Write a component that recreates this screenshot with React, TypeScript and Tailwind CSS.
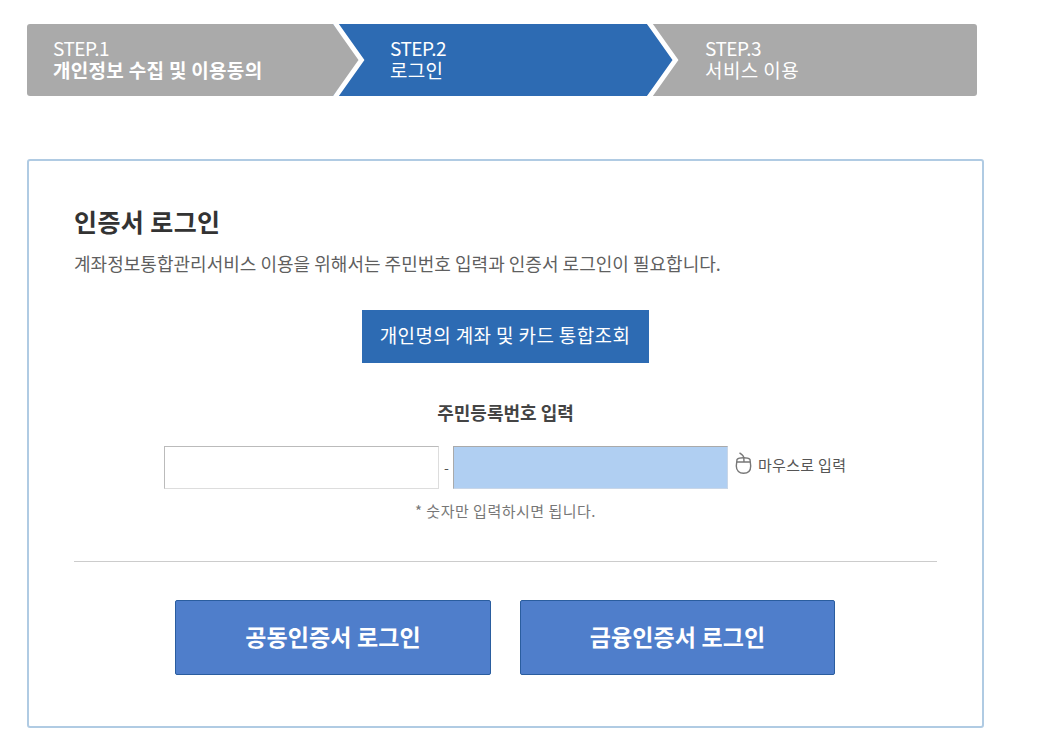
import React from 'react'

const Chevron: React.FC<{ fill: string }> = ({ fill }) => (
  <svg className="absolute top-0 left-full z-10" width="33" height="72" viewBox="0 0 33 72">
    <polygon points="0,0 28,36 0,72" fill={fill} />
    <polyline points="0.8,-3 28.5,36 0.8,75" fill="none" stroke="#fff" strokeWidth="4.8" />
  </svg>
)

const MouseIcon: React.FC = () => (
  <svg width="17" height="22" viewBox="0 0 17 22" fill="none" stroke="#777" strokeWidth="1.4">
    <path d="M2 7.5 C3.5 6 5.5 5.8 8.5 5.8 C11.5 5.8 13.5 6 15 7.5 L15.7 14 C15.7 19 12.5 21.3 8.5 21.3 C4.5 21.3 1.3 19 1.3 14 Z" fill="#fff" />
    <path d="M4.5 0.8 C6.5 2 8.5 3 8.8 5.8 L9 10 M1.8 10 H15.2" />
  </svg>
)

const App: React.FC = () => {
  return (
    <div className="w-[1040px] h-[742px] bg-white overflow-hidden pt-6 pl-[27px] font-['Noto_Sans_CJK_KR',sans-serif] text-[#555]">
      <div className="flex w-[950px] h-[72px] text-white text-[19px] leading-[22px]">
        <div className="relative w-[306px] bg-[#aaaaaa] rounded-l-[3px] pl-[26px] pt-[13px]">
          <p className="tracking-[-0.5px]">STEP.1</p>
          <p className="font-bold tracking-[0.3px]">개인정보 수집 및 이용동의</p>
          <Chevron fill="#aaaaaa" />
        </div>
        <div className="relative w-[314px] bg-[#2d6bb3] pl-[57px] pt-[13px]">
          <p className="tracking-[-0.5px]">STEP.2</p>
          <p className="tracking-[0.3px]">로그인</p>
          <Chevron fill="#2d6bb3" />
        </div>
        <div className="flex-1 bg-[#aaaaaa] rounded-r-[3px] pl-[58px] pt-[13px]">
          <p className="tracking-[-0.5px]">STEP.3</p>
          <p className="tracking-[0.4px]">서비스 이용</p>
        </div>
      </div>

      <div className="mt-[63px] w-[957px] h-[569px] border-2 border-[#b0cbe3] rounded-[3px] px-[45px] pt-[42px]">
        <h2 className="text-[25px] leading-[36px] font-bold text-[#333] tracking-[0.4px]">인증서 로그인</h2>
        <p className="mt-[12px] text-[18px] leading-[24px] text-[#5f5f5f] tracking-[0.02px]">계좌정보통합관리서비스 이용을 위해서는 주민번호 입력과 인증서 로그인이 필요합니다.</p>

        <div className="mt-[35px] flex justify-center">
          <button className="w-[287px] h-[53px] pb-[2px] bg-[#2d6bb3] text-white text-[19px] tracking-[0.37px] ml-[-1px]">개인명의 계좌 및 카드 통합조회</button>
        </div>

        <p className="mt-[37px] text-center text-[18px] leading-[24px] font-bold text-[#444]">주민등록번호 입력</p>

        <div className="mt-[22px] flex items-center ml-[90px]">
          <input className="w-[275px] h-[43px] bg-white border border-[#bbbbbb] border-r-[#dddddd] border-b-[#dddddd]" />
          <span className="w-[14px] pl-[1px] text-center text-[14px]">-</span>
          <input className="w-[275px] h-[43px] bg-[#b0cff2] border border-[#aaaaaa] border-r-[#c8d6e8] border-b-[#c8d6e8]" />
          <span className="ml-[7px] mr-[6px] mb-[9px] flex"><MouseIcon /></span>
          <span className="mb-[5px] text-[15px] leading-[20px] tracking-[0.3px]">마우스로 입력</span>
        </div>

        <p className="mt-[12px] text-center text-[15px] leading-[20px] text-[#777] tracking-[0.5px]">* 숫자만 입력하시면 됩니다.</p>

        <div className="mt-[40px] w-[863px] border-t border-[#cccccc]" />

        <div className="mt-[38px] flex ml-[101px] gap-[29px]">
          <button className="w-[316px] h-[75px] pb-[3px] bg-[#4f7ecb] border border-[#2a5d9f] rounded-[2px] text-white text-[23px] font-bold tracking-[0.1px]">공동인증서 로그인</button>
          <button className="w-[315px] h-[75px] pb-[3px] bg-[#4f7ecb] border border-[#2a5d9f] rounded-[2px] text-white text-[23px] font-bold tracking-[0.1px]">금융인증서 로그인</button>
        </div>
      </div>
    </div>
  )
}

export default App
